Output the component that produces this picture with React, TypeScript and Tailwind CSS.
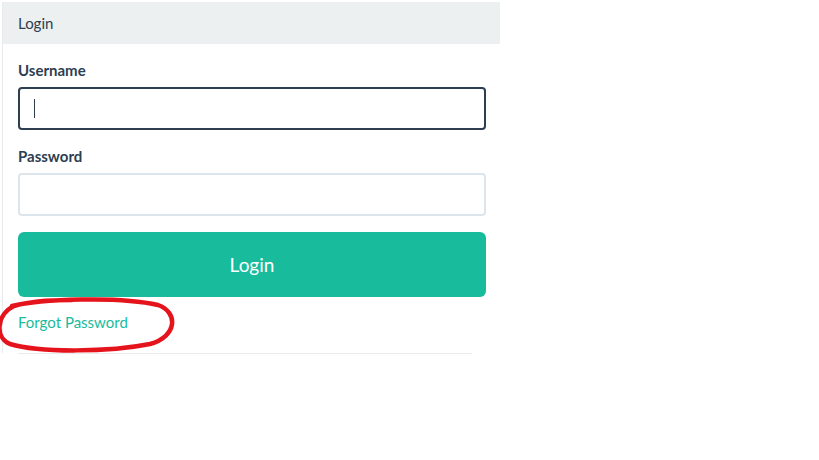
import React from 'react';

const App = () => {
  return (
    <div className="relative w-[819px] h-[460px] bg-white overflow-hidden" style={{ fontFamily: 'Lato, "Open Sans", sans-serif' }}>
      <div className="ml-[2px] mt-[2px] w-[498px] border-l border-[#e8ecee]">
        <div className="h-[42px] bg-[#ecf0f1] px-[15px] flex items-center text-[15px] text-[#2c3e50]">
          Login
        </div>

        <div className="pl-[15px] pr-[14px] pt-[16px] pb-[21px]">
          <label className="block h-[21px] leading-[21px] text-[15px] font-bold text-[#2c3e50] mb-[6px]">
            Username
          </label>
          <div className="h-[43px] rounded-[4px] border-2 border-[#2c3e50] flex items-center pl-[14px]">
            <span className="w-px h-[19px] bg-[#2c3e50]" />
          </div>

          <label className="block mt-[16px] h-[21px] leading-[21px] text-[15px] font-bold text-[#2c3e50] mb-[6px]">
            Password
          </label>
          <div className="h-[43px] rounded-[4px] border-2 border-[#dce4ec]" />

          <button className="mt-[16px] w-full h-[65px] rounded-[6px] bg-[#18bc9c] text-white text-[19px] flex items-center justify-center pt-[2px]">
            Login
          </button>

          <div className="mt-[15px] h-[20px] leading-[20px] text-[15px] text-[#18bc9c]">
            Forgot Password
          </div>
        </div>
      </div>
      <div className="ml-[18px] w-[454px] h-px bg-[#e8ecee]" />

      {/* hand-drawn red circle */}
      <svg className="absolute left-0 top-[294px]" width="182" height="62" viewBox="0 294 182 62" fill="none">
        <path
          d="M 12 306 C 40 299, 120 296, 158 305 C 178 312, 178 336, 150 344 C 110 352, 40 353, 10 344 C -6 337, -3 314, 14 306 C 30 301, 50 300, 72 300"
          stroke="#e5141c"
          strokeWidth="4.5"
          strokeLinecap="round"
        />
      </svg>
    </div>
  );
};

export default App;
